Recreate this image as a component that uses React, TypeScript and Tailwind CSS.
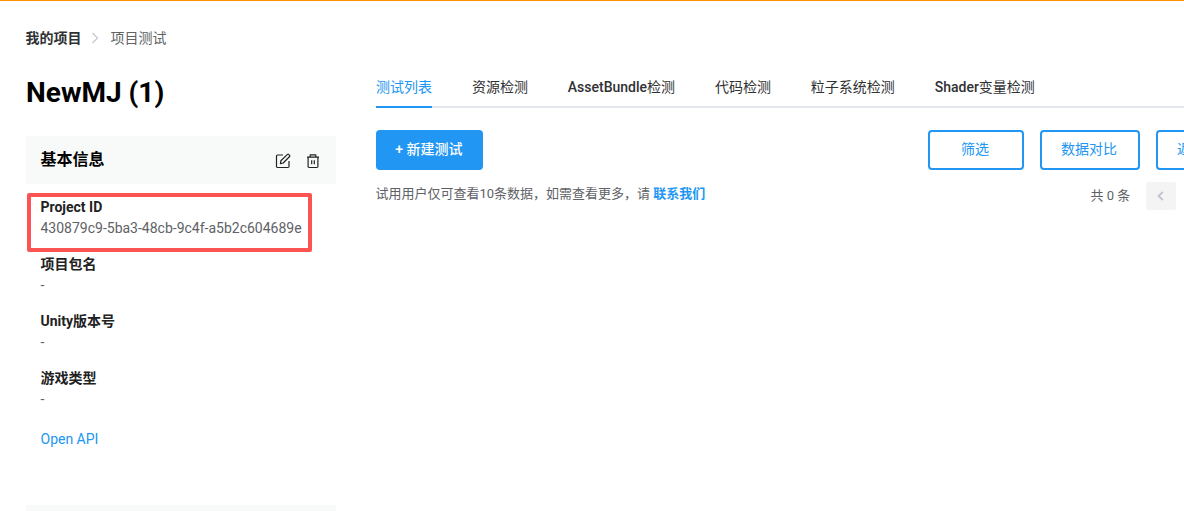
import clsx from "clsx";

const tabs = [
  { text: "测试列表" },
  { text: "资源检测" },
  { prefix: "AssetBundle", text: "检测" },
  { text: "代码检测" },
  { text: "粒子系统检测" },
  { prefix: "Shader", text: "变量检测" },
];

const fields = [
  { label: "Project ID", value: "430879c9-5ba3-48cb-9c4f-a5b2c604689e", marked: true },
  { label: "项目包名", value: "-" },
  { label: "Unity版本号", value: "-" },
  { label: "游戏类型", value: "-" },
];

function EditIcon() {
  return (
    <svg width="16" height="16" viewBox="0 0 16 16" fill="none" stroke="#222" strokeWidth="1.2" strokeLinejoin="round">
      <path d="M8 2H2.6A1.1 1.1 0 0 0 1.5 3.1v10.3a1.1 1.1 0 0 0 1.1 1.1h10.3a1.1 1.1 0 0 0 1.1-1.1V8" />
      <path d="M5.4 10.6l.5-2.9 6.6-6.3a.8.8 0 0 1 1.1 0l1 1a.8.8 0 0 1 0 1.1L8.2 10z" />
    </svg>
  );
}

function TrashIcon() {
  return (
    <svg width="16" height="16" viewBox="0 0 16 16" fill="none" stroke="#222" strokeWidth="1.2" strokeLinejoin="round">
      <path d="M2 4.2h12M5.2 4V1.8h5.6V4M3.1 4.2v9.2a1.1 1.1 0 0 0 1.1 1.1h7.6a1.1 1.1 0 0 0 1.1-1.1V4.2" />
      <path d="M6.7 7.2v4M9.3 7.2v4" />
    </svg>
  );
}

function Breadcrumb() {
  return (
    <nav className="-ml-[0.5px] flex h-5 items-center text-sm leading-5">
      <a className="font-bold text-[#303133]">我的项目</a>
      <svg className="mr-[10px] ml-2" width="11" height="12" viewBox="0 0 11 12" fill="none" stroke="#c0c4cc" strokeWidth="1.1">
        <path d="M2.5 1l5 5-5 5" />
      </svg>
      <span className="text-[#606266]">项目测试</span>
    </nav>
  );
}

function Sidebar() {
  return (
    <aside className="w-[310px] shrink-0">
      <h1 className="h-8 pt-px text-[28px] leading-8 font-bold text-black">NewMJ (1)</h1>
      <section className="mt-7 h-[369px]">
        <header className="flex h-12 items-center justify-between bg-[#f8faf9] pr-[15px] pl-[14.5px]">
          <h2 className="text-base font-bold text-black">基本信息</h2>
          <div className="flex gap-[14px] pt-[2px]">
            <EditIcon />
            <TrashIcon />
          </div>
        </header>
        <dl className="px-[14.5px] pt-[13px] text-sm leading-[21px]">
          {fields.map((field) => (
            <div key={field.label} className="relative mb-[15px]">
              {field.marked && (
                <div className="absolute -top-1 -left-[13.5px] h-[59px] w-[285px] rounded-[2px] border-4 border-[#fc5353]" />
              )}
              <dt className="font-bold text-[#222]">{field.label}</dt>
              <dd className="text-[#606266]">{field.value}</dd>
            </div>
          ))}
        </dl>
        <a className="ml-[14.5px] block pt-[4px] text-sm leading-[21px] text-[#2196f3]">Open API</a>
      </section>
      <div className="h-12 bg-[#f8faf9]" />
    </aside>
  );
}

function OutlineButton({ label, className }: { label: string; className: string }) {
  return (
    <button
      className={clsx(
        "h-10 shrink-0 rounded-[4px] border-2 border-[#2196f3] pr-[2px] pb-[2px] text-sm whitespace-nowrap text-[#2196f3]",
        className,
      )}
    >
      {label}
    </button>
  );
}

function Content() {
  return (
    <section className="w-[920px] shrink-0">
      <div className="flex h-8 gap-[39.9px] border-b-2 border-[#e4e7ed] text-sm text-[#303133]">
        {tabs.map((tab, i) => (
          <div
            key={tab.text + i}
            className={clsx(
              "h-8 leading-[22px] whitespace-nowrap",
              i === 0 && "border-b-2 border-[#2196f3] text-[#2196f3]",
            )}
          >
            {tab.prefix && <span className="font-medium">{tab.prefix}</span>}
            {tab.text}
          </div>
        ))}
      </div>
      <div className="mt-[22px] flex">
        <button className="h-10 w-[107px] rounded-[4px] bg-[#2196f3] pr-px pb-[2px] text-sm font-medium text-white">
          + 新建测试
        </button>
        <div className="ml-[445px] flex gap-4">
          <OutlineButton label="筛选" className="w-24" />
          <OutlineButton label="数据对比" className="w-[100px]" />
          <OutlineButton label="返回项目" className="w-[100px]" />
        </div>
      </div>
      <div className="flex pt-3 text-[13px] text-[#606266]">
        <p className="-ml-[0.5px] h-6 w-[715px] leading-6">
          试用用户仅可查看10条数据，如需查看更多，请{" "}
          <a className="font-bold text-[#2196f3]">联系我们</a>
        </p>
        <span className="w-[55.5px] leading-7">共 0 条</span>
        <button className="flex h-7 w-[30px] items-center justify-center rounded-[2px] bg-[#f4f4f5] text-[#c0c4cc]">
          <svg width="12" height="12" viewBox="0 0 12 12" fill="none" stroke="currentColor" strokeWidth="1.8">
            <path d="M7.8 2L3.6 6l4.2 4" />
          </svg>
        </button>
      </div>
    </section>
  );
}

export default function App() {
  return (
    <div className="h-[511px] w-[1184px] overflow-hidden border-t border-[#ff9100] bg-white pt-[27px] pl-[26px] font-[Roboto,'Noto_Sans_CJK_SC',sans-serif]">
      <Breadcrumb />
      <main className="flex gap-10 pt-7">
        <Sidebar />
        <Content />
      </main>
    </div>
  );
}
